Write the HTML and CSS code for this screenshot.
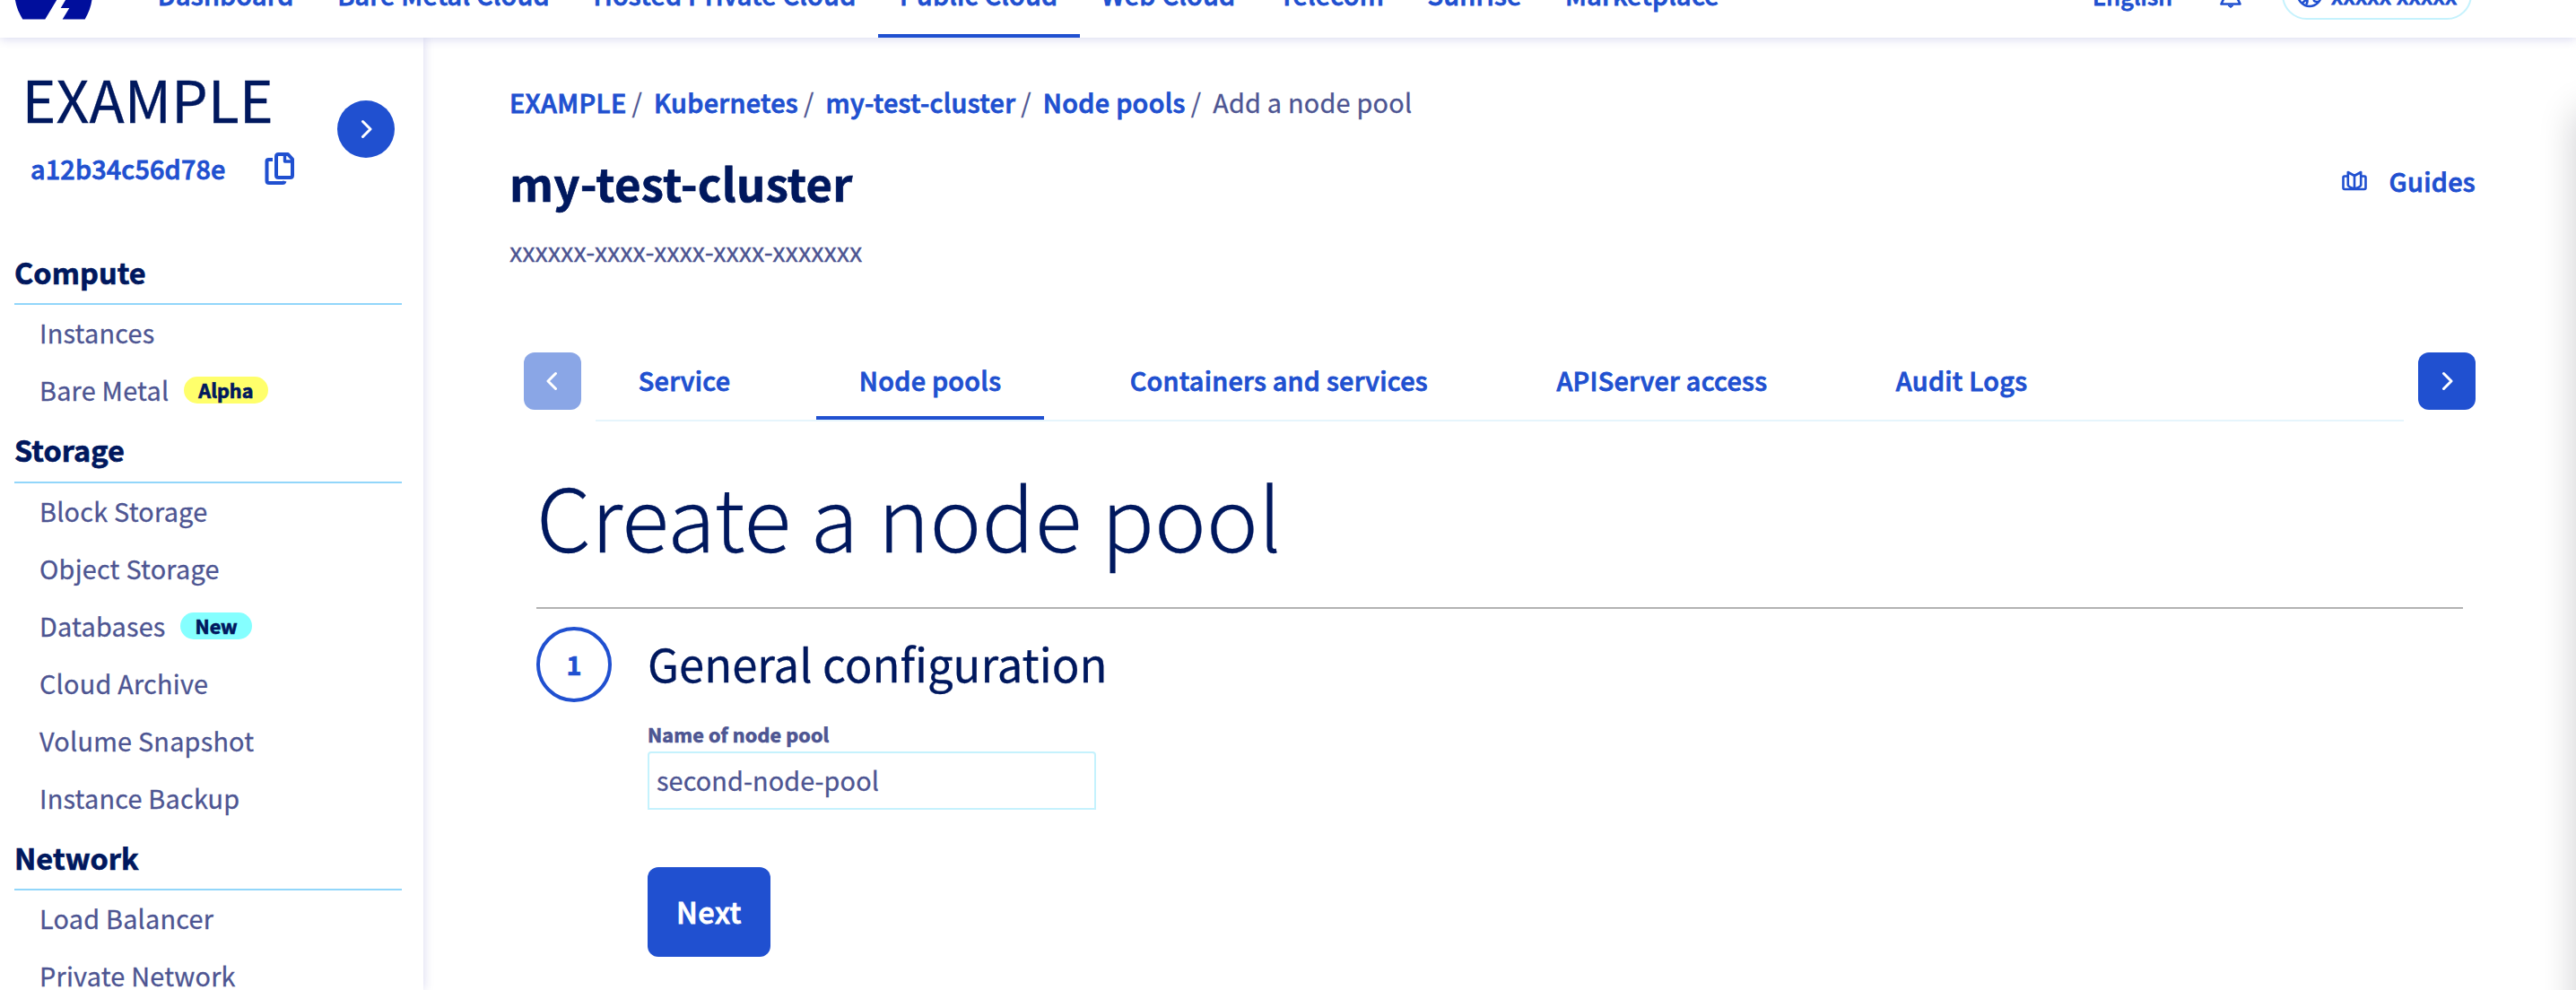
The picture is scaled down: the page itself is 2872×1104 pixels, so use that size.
FILE: index.html
```
<!DOCTYPE html>
<html lang="en">
<head>
<meta charset="utf-8">
<title>Create a node pool</title>
<link rel="stylesheet" href="styles.css">
</head>
<body>
<header class="topbar">
  <svg class="logo" width="120" height="96" viewBox="0 0 120 96" fill="#000e9c">
    <path d="M25.3 75.4C18 64 13.500 49 18 32L33 12 64 8 78 29.500 50.300 75.400Z"/>
    <path d="M94.700 75.400H69.700L77.300 63H67.700L92 22C106 36 106 56 94.700 75.400Z"/>
  </svg>
  <nav class="mainnav">
    <a>Dashboard</a><a>Bare Metal Cloud</a><a>Hosted Private Cloud</a><a class="active">Public Cloud</a><a>Web Cloud</a><a>Telecom</a><a>Sunrise</a><a>Marketplace</a>
  </nav>
  <div class="tools">
    <span class="lang">English</span>
    <svg class="bell" width="26" height="32" viewBox="0 0 26 32" fill="none" stroke="#2050d0" stroke-width="2.600" stroke-linejoin="round">
      <path d="M2.500 26.500H23.500L20.500 20V13C20.500 8 17 4.500 13 4.500S5.500 8 5.500 13V20Z"/>
      <path d="M10 28.200H16L13 30.500Z" fill="#2050d0" stroke-width="1"/>
    </svg>
    <div class="account">
      <svg width="30" height="30" viewBox="0 0 30 30" fill="none" stroke="#2050d0" stroke-width="2.600">
        <circle cx="15" cy="15" r="13"/>
        <path d="M3 17C6 20 9 16 11 19S7 22 7 25M25 23C22 23 19 23 20 20S25 19 27.500 17M11 19C13 20 13 24 11 26M5 9C10 11 13 8 13 3"/>
      </svg>
      <span>xxxxx xxxxx</span>
    </div>
  </div>
</header>

<div class="page">
  <aside class="sidebar">
    <div class="project">
      <div class="project-info">
        <div class="project-name">EXAMPLE</div>
        <div class="project-id">
          <span>a12b34c56d78e</span>
          <svg width="34" height="36" viewBox="0 0 34 36" fill="none" stroke="#2050d0" stroke-width="4" stroke-linejoin="round">
            <path d="M13 4.500Q13 2 15.500 2H26L31 7.500V25.500Q31 28 28.500 28H15.500Q13 28 13 25.500Z"/>
            <path d="M22.500 3V10H30" stroke-width="3.400"/>
            <path d="M9 8H4.500Q2.500 8 2.500 10V31.500Q2.500 34 5 34H20Q22 34 22.500 32"/>
          </svg>
        </div>
      </div>
      <button class="round-btn"><svg width="14" height="22" viewBox="0 0 14 22"><path class="chev" d="M3.500 2.500 12 11 3.500 19.500"/></svg></button>
    </div>
    <nav class="menu">
      <h2>Compute</h2>
      <ul>
        <li>Instances</li>
        <li>Bare Metal <span class="badge alpha">Alpha</span></li>
      </ul>
      <h2>Storage</h2>
      <ul>
        <li>Block Storage</li>
        <li>Object Storage</li>
        <li>Databases <span class="badge new">New</span></li>
        <li>Cloud Archive</li>
        <li>Volume Snapshot</li>
        <li>Instance Backup</li>
      </ul>
      <h2>Network</h2>
      <ul>
        <li>Load Balancer</li>
        <li>Private Network</li>
      </ul>
    </nav>
  </aside>

  <main class="content">
    <div class="crumbs">
      <a>EXAMPLE</a><i>/</i><a>Kubernetes</a><i>/</i><a>my-test-cluster</a><i>/</i><a>Node pools</a><i>/</i><span>Add a node pool</span>
    </div>
    <div class="title-row">
      <h1>my-test-cluster</h1>
      <a class="guides">
        <svg width="28" height="24" viewBox="0 0 28 24" fill="none" stroke="#2050d0" stroke-width="2.600" stroke-linejoin="round">
          <path d="M6 6.500H3Q1.500 6.500 1.500 8V19.500Q1.500 21 3 21H25Q26.500 21 26.500 19.500V8Q26.500 6.500 25 6.500H22"/>
          <path d="M14 6 6.800 2V16.500Q8 19 14 20.500 20 19 21.200 16.500V2L14 6V20"/>
        </svg>
        <span>Guides</span>
      </a>
    </div>
    <div class="uid">xxxxxx-xxxx-xxxx-xxxx-xxxxxxx</div>

    <div class="tab-row">
      <button class="square-btn disabled"><svg width="14" height="22" viewBox="0 0 14 22"><path class="chev" d="M10.500 2.500 2 11 10.500 19.500"/></svg></button>
      <div class="tabs">
        <a>Service</a><a class="active">Node pools</a><a>Containers and services</a><a>APIServer access</a><a>Audit Logs</a>
      </div>
      <button class="square-btn"><svg width="14" height="22" viewBox="0 0 14 22"><path class="chev" d="M3.500 2.500 12 11 3.500 19.500"/></svg></button>
    </div>

    <section class="panel">
      <div class="panel-title">Create a node pool</div>
      <div class="step">
        <div class="step-num">1</div>
        <div class="step-body">
          <h3>General configuration</h3>
          <label for="pool">Name of node pool</label>
          <div class="field" id="pool">second-node-pool</div>
          <button class="next">Next</button>
        </div>
      </div>
    </section>
  </main>
</div>
<div class="drawer"></div>
</body>
</html>
```
FILE: styles.css
```
* { box-sizing: border-box; }
html, body { height: 1104px; overflow: hidden; }
body {
  margin: 0;
  position: relative;
  background: #fff;
  color: #4d5592;
  font: 400 28.8px/40px "Noto Sans CJK SC", sans-serif;
  letter-spacing: 0.24px;
  -webkit-text-stroke: 0.3px currentColor;
}
h1, h2, h3, ul { margin: 0; padding: 0; list-style: none; }
h1, h2, label, .badge, .step-num { -webkit-text-stroke: 0.7px currentColor; }
button { border: 0; padding: 0; font-family: inherit; }
svg { display: block; flex: none; }

/* Semibold links */
a, .lang, .account, .project-id {
  color: #2050d0;
  font-weight: 500;
  letter-spacing: 0.32px;
  -webkit-text-stroke: 0.8px #2050d0;
}
.chev { fill: none; stroke: #fff; stroke-width: 3; stroke-linecap: round; stroke-linejoin: round; }

/* Top bar, scrolled partly out of view */
.topbar {
  position: relative;
  z-index: 2;
  display: flex;
  height: 96px;
  margin-top: -54px;
  background: #fff;
  box-shadow: 0 0 12px rgba(0, 14, 156, 0.2);
}
.mainnav { display: flex; margin-left: 31.500px; }
.mainnav a { padding: 0 24.200px; line-height: 96px; letter-spacing: 0.235px; white-space: nowrap; }
.mainnav .active { box-shadow: inset 0 -4px #2050d0; }
.tools { display: flex; align-items: center; margin-left: auto; padding: 0 116px 1px 0; }
.lang { font-size: 25.2px; line-height: 40px; letter-spacing: 0.15px; padding-top: 2px; }
.bell { margin: 0 44px 0 52px; }
.account {
  display: flex;
  align-items: center;
  gap: 9px;
  width: 212px;
  height: 56px;
  padding-left: 14px;
  border: 2px solid #c5f2fd;
  border-radius: 28px;
  font-size: 25.2px;
  letter-spacing: 0.2px;
}

.page { display: flex; height: 1062px; overflow: hidden; }

/* Sidebar */
.sidebar {
  flex: none;
  width: 472px;
  padding-top: 27px;
  box-shadow: 0 0 12px rgba(0, 14, 156, 0.16);
}
.project { display: flex; align-items: flex-start; }
.project-info { width: 376px; }
.project-name { padding-left: 24.500px; font-size: 64.4px; line-height: 80px; letter-spacing: 0; color: #00185e; }
.project-id { display: flex; align-items: center; justify-content: space-between; height: 64px; margin-top: 7px; padding: 0 47px 0 34px; letter-spacing: 0.17px; }
.round-btn {
  display: flex; align-items: center; justify-content: center;
  width: 64px; height: 64px; margin-top: 43px;
  border-radius: 50%;
  background: #2050d0;
}
.menu { margin: 47.500px 24px 0 16px; }
.menu h2 {
  height: 72.500px;
  margin-bottom: -2px;
  border-bottom: 2px solid #92d6fa;
  font-size: 32.4px;
  line-height: 69px;
  letter-spacing: 0.1px;
  color: #00185e;
}
.menu li { display: flex; align-items: center; height: 64px; padding: 2px 0 0 28px; }
.badge {
  height: 30px;
  margin-left: 16.500px;
  border-radius: 15px;
  font-size: 21.6px;
  font-weight: 700;
  line-height: 29px;
  letter-spacing: 0;
  text-align: center;
  color: #00185e;
}
.alpha { width: 94px; background: #ffff6b; }
.new { width: 80px; background: #85ffff; }

/* Content */
.content { flex: 1; padding: 51.900px 112px 0 96px; }
.crumbs { display: flex; }
.crumbs i { margin: 0 13px 0 6px; font-style: normal; }
.title-row { display: flex; align-items: center; justify-content: space-between; height: 60px; margin-top: 39.100px; }
h1 { font-size: 50.8px; line-height: 60px; letter-spacing: 0.25px; color: #00185e; }
.guides { display: flex; align-items: center; gap: 24px; padding-bottom: 1px; }
.uid { margin-top: 27.500px; letter-spacing: -0.06px; }

.tab-row { display: flex; align-items: center; margin-top: 78.500px; padding-left: 16px; }
.square-btn {
  display: flex; align-items: center; justify-content: center;
  flex: none; width: 64px; height: 64px;
  margin-top: 1px;
  border-radius: 12px;
  background: #2050d0;
}
.square-btn.disabled { background: #8aa6e6; }
.tabs { display: flex; flex: 1; gap: 48px; margin: 0 16px; border-bottom: 2px solid #e6f5fc; }
.tabs a { padding: 0 47.700px 0 47.800px; line-height: 89px; letter-spacing: 0.27px; }
.tabs .active { box-shadow: inset 0 -4px #2050d0; }

.panel { padding: 43.600px 14px 0 30px; }
.panel-title {
  padding-bottom: 43.500px;
  border-bottom: 2px solid #b3b3b3;
  font-size: 97.4px;
  font-weight: 300;
  line-height: 120px;
  letter-spacing: 0.15px;
  color: #00185e;
}
.step { display: flex; gap: 40px; margin-top: 20px; }
.step-num {
  flex: none;
  width: 84px; height: 84px;
  border: 4px solid #2050d0;
  border-radius: 50%;
  font-weight: 700;
  line-height: 76px;
  text-align: center;
  color: #2050d0;
}
.step-body { display: flex; flex-direction: column; align-items: flex-start; padding-top: 10.300px; }
h3 { font-size: 50.8px; font-weight: 400; line-height: 60px; letter-spacing: 0; color: #00185e; }
label { margin-top: 35px; font-size: 21.6px; font-weight: 700; line-height: 30px; letter-spacing: 0.15px; }
.field {
  width: 500px; height: 65px;
  margin-top: 4px;
  padding-left: 8px;
  border: 2px solid #c5f2fd;
  border-radius: 4px 4px 0 0;
  line-height: 60px;
  letter-spacing: 0.1px;
}
.next {
  width: 137px; height: 100px;
  margin-top: 64px;
  padding-bottom: 2px;
  border-radius: 12px;
  background: #2050d0;
  color: #fff;
  font-size: 32.4px;
  font-weight: 500;
  line-height: 96px;
  letter-spacing: 0.6px;
  -webkit-text-stroke: 0.9px #fff;
}

/* Side drawer parked just off the right edge */
.drawer {
  position: absolute;
  top: 124px;
  left: 100%;
  width: 40px;
  height: 1100px;
  box-shadow: 0 0 42px rgba(0, 0, 20, 0.2);
}
```
